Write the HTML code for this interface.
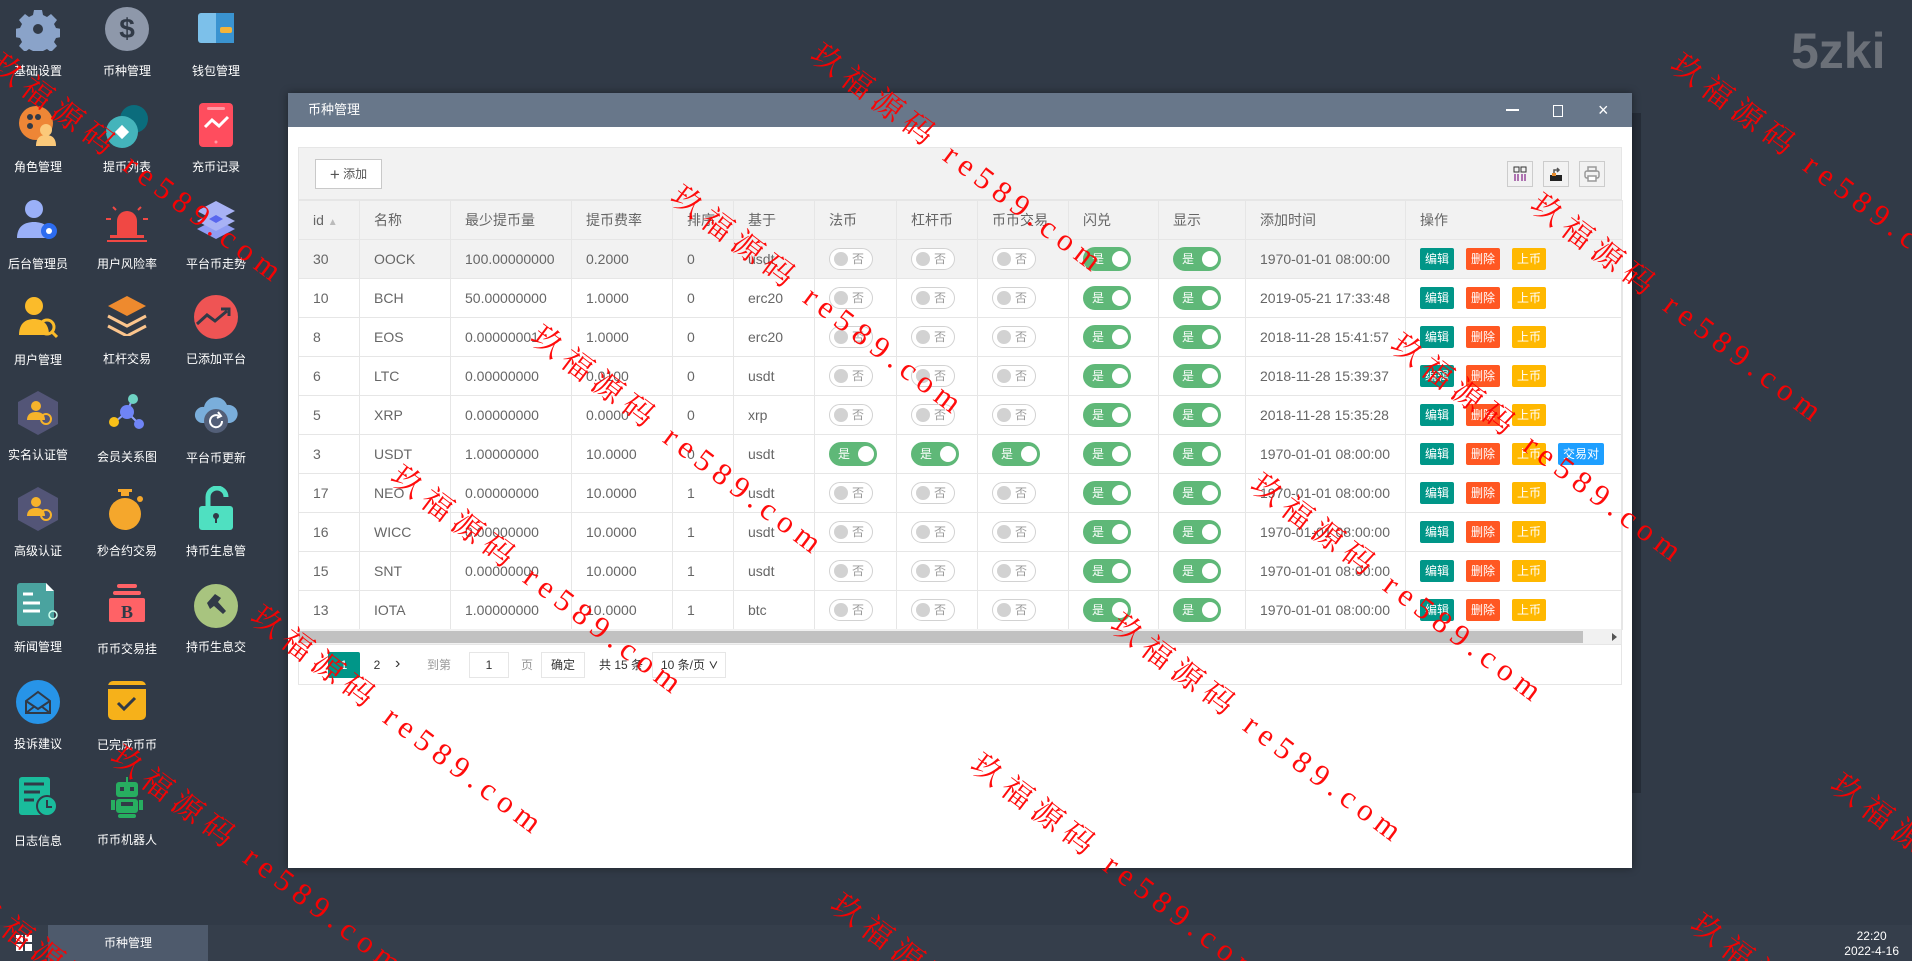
<!DOCTYPE html>
<html><head><meta charset="utf-8">
<style>
*{margin:0;padding:0;box-sizing:border-box}
html,body{width:1912px;height:961px;overflow:hidden}
body{background:#313a47;font-family:"Liberation Sans","Noto Sans CJK SC",sans-serif}
#root{position:relative;width:1912px;height:961px;overflow:hidden;background:#313a47}
.ic{position:absolute;width:88px;text-align:center}
.ic svg{display:block;margin:0 auto}
.ic span{display:block;color:#fff;font-size:12px;line-height:14px;position:absolute;left:0;right:0;white-space:nowrap;overflow:hidden}
.logo{position:absolute;left:1791px;top:22px;font-size:50px;font-weight:bold;color:#6b7078}
.win{position:absolute;left:288px;top:93px;width:1344px;height:775px;background:#fff;box-shadow:0 0 8px rgba(0,0,0,.4)}
.tb{height:34px;background:#68778a;color:#fff;font-size:13px;line-height:34px;padding-left:20px;position:relative}
.box{position:absolute;left:10px;top:54px;width:1324px;height:538px;border:1px solid #e6e6e6}
.tool{height:52px;background:#f2f2f2;border-bottom:1px solid #e6e6e6;position:relative}
.add{position:absolute;left:16px;top:11px;width:67px;height:30px;border:1px solid #c9c9c9;background:#fff;font-size:12px;color:#555;line-height:28px;text-align:center}
.tbtn{position:absolute;top:13px;width:26px;height:26px;border:1px solid #ccc;background:#f2f2f2}
table{border-collapse:collapse;table-layout:fixed;width:1324px;position:absolute;left:-1px;top:52px}
td,th{height:39px;border:1px solid #e6e6e6;font-size:14px;color:#666;font-weight:normal;text-align:left;padding-left:14px;white-space:nowrap;overflow:hidden}
th{background:#f2f2f2}
tr.h td{background:#f2f2f2}
.sw{display:inline-block;width:44px;height:22px;border-radius:11px;border:1px solid #d2d2d2;position:relative;vertical-align:middle;background:#fff}
.sw i{position:absolute;left:4px;top:3px;width:14px;height:14px;border-radius:50%;background:#d2d2d2}
.sw b{position:absolute;left:22px;top:2px;font-size:12px;color:#999;font-weight:normal;line-height:16px}
.sw.on{background:#5fb878;border-color:#5fb878;width:48px;height:24px;border-radius:12px}
.sw.on i{left:28px;top:3px;width:16px;height:16px;background:#fff}
.sw.on b{left:8px;top:3px;color:#fff}
.b{display:inline-block;height:22px;line-height:22px;padding:0 5px;font-size:12px;color:#fff;margin-right:12px;border-radius:2px;vertical-align:middle}
.wm{position:absolute;color:#f00;font-family:"Liberation Serif","Noto Serif CJK SC",serif;font-size:31px;letter-spacing:7px;transform:rotate(37deg);transform-origin:0 0;white-space:nowrap;opacity:.95}
</style></head><body><div id="root">

<div class="logo">5zki</div>

<div class="ic" style="left:-6px;top:7px"><svg width="44" height="44" viewBox="0 0 44 44"><path fill="#8aa3c9" d="M18 3h8l1 5 4 2 4-3 6 6-3 4 2 4 5 1v8l-5 1-2 4 3 4-6 6-4-3-4 2-1 5h-8l-1-5-4-2-4 3-6-6 3-4-2-4-5-1v-8l5-1 2-4-3-4 6-6 4 3 4-2z"/><circle cx="22" cy="22" r="5" fill="#313a47"/></svg><span style="top:57px">基础设置</span></div>
<div class="ic" style="left:83px;top:6px"><svg width="46" height="46" viewBox="0 0 46 46"><circle cx="23" cy="23" r="22" fill="#8e98aa"/><text x="23" y="32" text-anchor="middle" font-size="28" font-weight="bold" fill="#313a47" font-family="Liberation Sans">$</text></svg><span style="top:58px">币种管理</span></div>
<div class="ic" style="left:172px;top:7px"><svg width="40" height="44" viewBox="0 0 40 44"><rect x="2" y="6" width="36" height="30" rx="3" fill="#7cc0ea"/><rect x="20" y="6" width="18" height="30" fill="#3a93d0"/><rect x="24" y="20" width="12" height="6" rx="2" fill="#f4b43a"/></svg><span style="top:57px">钱包管理</span></div>

<div class="ic" style="left:-6px;top:103px"><svg width="44" height="44" viewBox="0 0 44 44"><circle cx="20" cy="20" r="17" fill="#ee8636"/><circle cx="14" cy="14" r="3" fill="#313a47"/><circle cx="22" cy="14" r="3" fill="#313a47"/><circle cx="14" cy="23" r="3" fill="#313a47"/><circle cx="30" cy="27" r="6" fill="#fbc97a"/><path d="M20 43c0-8 4-11 10-11s10 3 10 11z" fill="#fbc97a"/></svg><span style="top:57px">角色管理</span></div>
<div class="ic" style="left:83px;top:103px"><svg width="46" height="46" viewBox="0 0 46 46"><circle cx="30" cy="16" r="14" fill="#0b6c7c"/><circle cx="18" cy="29" r="16" fill="#44b4bb"/><rect x="13" y="24" width="10" height="10" transform="rotate(45 18 29)" fill="#fff"/></svg><span style="top:57px">提币列表</span></div>
<div class="ic" style="left:172px;top:101px"><svg width="40" height="48" viewBox="0 0 40 48"><rect x="3" y="2" width="34" height="44" rx="4" fill="#ff4d5e"/><rect x="11" y="6" width="18" height="3" rx="1.5" fill="#ff9aa4"/><path d="M9 26l7-7 7 6 9-9" stroke="#fff" stroke-width="3" fill="none"/><circle cx="20" cy="41" r="1.5" fill="#ff9aa4"/></svg><span style="top:59px">充币记录</span></div>

<div class="ic" style="left:-6px;top:199px"><svg width="44" height="44" viewBox="0 0 44 44"><circle cx="18" cy="10" r="9" fill="#9ab0f8"/><path d="M1 39c0-12 8-16 17-16s17 4 17 16z" fill="#9ab0f8"/><circle cx="33" cy="32" r="8" fill="#2d6cf0"/><circle cx="33" cy="32" r="3" fill="#fff"/></svg><span style="top:58px">后台管理员</span></div>
<div class="ic" style="left:83px;top:199px"><svg width="46" height="44" viewBox="0 0 46 44"><path d="M13 36V22a10 10 0 0 1 20 0v14z" fill="#f04844"/><rect x="6" y="36" width="34" height="3" fill="#f04844"/><rect x="3" y="41" width="40" height="2" fill="#f04844"/><path d="M2 20h5M39 20h5M9 8l3 3M37 8l-3 3" stroke="#f04844" stroke-width="2"/></svg><span style="top:58px">用户风险率</span></div>
<div class="ic" style="left:172px;top:199px"><svg width="40" height="42" viewBox="0 0 40 42"><path d="M20 20L1 30l19 10 19-10z" fill="#8f9cf3"/><path d="M20 12L1 22l19 10 19-10z" fill="#a8b2f5"/><path d="M20 2L1 12l19 10 19-10z" fill="#a8b2f5"/><path d="M20 16l-7 4 7 4 7-4z" fill="#5866ee"/></svg><span style="top:58px">平台币走势</span></div>

<div class="ic" style="left:-6px;top:295px"><svg width="40" height="44" viewBox="0 0 40 44"><circle cx="16" cy="11" r="9" fill="#fbbb2a"/><path d="M1 40c0-12 7-16 15-16s15 4 15 16z" fill="#fbbb2a"/><circle cx="29" cy="32" r="7" fill="none" stroke="#fbbb2a" stroke-width="3" /><path d="M34 37l5 5" stroke="#fbbb2a" stroke-width="3"/></svg><span style="top:58px">用户管理</span></div>
<div class="ic" style="left:83px;top:294px"><svg width="42" height="42" viewBox="0 0 42 42"><path d="M21 2L2 12l19 10 19-10z" fill="#ee8a2e"/><path d="M2 22l19 10 19-10M2 32l19 10 19-10" stroke="#fcc58d" stroke-width="3" fill="none"/></svg><span style="top:58px">杠杆交易</span></div>
<div class="ic" style="left:172px;top:294px"><svg width="46" height="46" viewBox="0 0 46 46"><circle cx="23" cy="23" r="22" fill="#ef5454"/><path d="M4 30l10-9 8 6 12-10M28 15h8v7" stroke="#313a47" stroke-width="3" fill="none"/></svg><span style="top:58px">已添加平台</span></div>

<div class="ic" style="left:-6px;top:390px"><svg width="42" height="46" viewBox="0 0 42 46"><path d="M21 1l20 11v22L21 45 1 34V12z" fill="#535577"/><circle cx="19" cy="16" r="5" fill="#f6b32b"/><path d="M10 30c0-6 4-8 9-8s9 2 9 8z" fill="#f6b32b"/><circle cx="29" cy="29" r="5" fill="none" stroke="#f6b32b" stroke-width="2"/></svg><span style="top:58px">实名认证管</span></div>
<div class="ic" style="left:83px;top:392px"><svg width="40" height="42" viewBox="0 0 40 42"><path d="M20 20L25 8M20 20L9 29M20 20L31 31" stroke="#8ea0f8" stroke-width="2"/><circle cx="20" cy="20" r="7" fill="#6f84f6"/><circle cx="26" cy="7" r="5" fill="#6fd3c4"/><circle cx="7" cy="30" r="5" fill="#f8c018"/><circle cx="32" cy="32" r="5" fill="#6f84f6"/></svg><span style="top:58px">会员关系图</span></div>
<div class="ic" style="left:172px;top:393px"><svg width="44" height="42" viewBox="0 0 44 42"><path d="M8 30a8 8 0 0 1 2-16 12 12 0 0 1 23-2 9 9 0 0 1 3 18z" fill="#7aaedb"/><circle cx="22" cy="28" r="12" fill="#535f78"/><path d="M28 28a6 6 0 1 1-3-5" stroke="#fff" stroke-width="2" fill="none"/><path d="M24 19l3 4-4 2" stroke="#fff" stroke-width="2" fill="none"/></svg><span style="top:58px">平台币更新</span></div>

<div class="ic" style="left:-6px;top:486px"><svg width="42" height="46" viewBox="0 0 42 46"><path d="M21 1l20 11v22L21 45 1 34V12z" fill="#535577"/><circle cx="19" cy="16" r="5" fill="#f6b32b"/><path d="M10 30c0-6 4-8 9-8s9 2 9 8z" fill="#f6b32b"/><circle cx="29" cy="29" r="5" fill="none" stroke="#f6b32b" stroke-width="2"/></svg><span style="top:58px">高级认证</span></div>
<div class="ic" style="left:83px;top:487px"><svg width="40" height="44" viewBox="0 0 40 44"><circle cx="18" cy="27" r="16" fill="#f5a72c"/><rect x="14" y="4" width="8" height="5" fill="#f5a72c"/><rect x="11" y="2" width="14" height="3" fill="#f5a72c"/><circle cx="33" cy="12" r="3" fill="#f5a72c"/></svg><span style="top:57px">秒合约交易</span></div>
<div class="ic" style="left:172px;top:486px"><svg width="40" height="46" viewBox="0 0 40 46"><path d="M12 20v-9a9 9 0 0 1 18 0" stroke="#4fe0c1" stroke-width="5" fill="none"/><rect x="3" y="20" width="34" height="24" rx="3" fill="#4fe0c1"/><circle cx="20" cy="30" r="3" fill="#313a47"/><rect x="19" y="30" width="2" height="7" fill="#313a47"/></svg><span style="top:58px">持币生息管</span></div>

<div class="ic" style="left:-6px;top:582px"><svg width="44" height="46" viewBox="0 0 44 46"><path d="M4 1h26l8 8v32a3 3 0 0 1-3 3H4a3 3 0 0 1-3-3V4a3 3 0 0 1 3-3z" fill="#4aa39f"/><path d="M30 1v8h8" fill="#fff"/><path d="M7 12h10M7 21h17M7 29h17" stroke="#fff" stroke-width="3"/><circle cx="37" cy="33" r="4" fill="none" stroke="#cfe" stroke-width="1.5"/></svg><span style="top:58px">新闻管理</span></div>
<div class="ic" style="left:83px;top:584px"><svg width="36" height="40" viewBox="0 0 36 40"><rect x="8" y="0" width="20" height="4" rx="2" fill="#ff6266"/><rect x="4" y="7" width="28" height="4" rx="2" fill="#ff6266"/><rect x="0" y="14" width="36" height="24" rx="2" fill="#ff6266"/><text x="18" y="34" text-anchor="middle" font-size="18" font-weight="bold" fill="#313a47" font-family="Liberation Serif">B</text></svg><span style="top:58px;height:16px">币币交易挂</span></div>
<div class="ic" style="left:172px;top:583px"><svg width="46" height="46" viewBox="0 0 46 46"><circle cx="23" cy="23" r="22" fill="#a8c47f"/><path d="M14 20l8-9 6 4-3 4 8 9-3 3-9-8-4 3z" fill="#313a47"/></svg><span style="top:57px">持币生息交</span></div>

<div class="ic" style="left:-6px;top:679px"><svg width="46" height="46" viewBox="0 0 46 46"><circle cx="23" cy="23" r="22" fill="#2794e8"/><path d="M11 22l12-9 12 9v12H11z" fill="none" stroke="#313a47" stroke-width="2"/><path d="M11 22l12 8 12-8M11 34l9-7M35 34l-9-7" stroke="#313a47" stroke-width="2" fill="none"/></svg><span style="top:58px">投诉建议</span></div>
<div class="ic" style="left:83px;top:680px"><svg width="40" height="42" viewBox="0 0 40 42"><rect x="1" y="1" width="38" height="39" rx="5" fill="#f6b11a"/><rect x="1" y="5" width="38" height="4" fill="#313a47"/><path d="M11 23l6 6 11-11" stroke="#313a47" stroke-width="3" fill="none"/></svg><span style="top:58px">已完成币币</span></div>

<div class="ic" style="left:-6px;top:776px"><svg width="40" height="42" viewBox="0 0 40 42"><rect x="1" y="1" width="31" height="38" rx="3" fill="#1abc9c"/><path d="M6 8h20M6 16h16M6 24h10" stroke="#313a47" stroke-width="3"/><circle cx="29" cy="30" r="10" fill="#1abc9c" stroke="#313a47" stroke-width="2"/><path d="M29 24v7h5" stroke="#313a47" stroke-width="2" fill="none"/></svg><span style="top:58px">日志信息</span></div>
<div class="ic" style="left:83px;top:775px"><svg width="36" height="44" viewBox="0 0 36 44"><rect x="7" y="7" width="22" height="15" rx="3" fill="#27ae60"/><rect x="11" y="12" width="4" height="4" fill="#313a47"/><rect x="21" y="12" width="4" height="4" fill="#313a47"/><rect x="17" y="2" width="2" height="5" fill="#27ae60"/><rect x="7" y="24" width="22" height="14" rx="3" fill="#27ae60"/><rect x="12" y="27" width="12" height="4" fill="#313a47"/><rect x="2" y="25" width="4" height="10" fill="#27ae60"/><rect x="30" y="25" width="4" height="10" fill="#27ae60"/><rect x="9" y="39" width="18" height="4" rx="2" fill="#27ae60"/></svg><span style="top:58px">币币机器人</span></div>

<div style="position:absolute;left:1632px;top:113px;width:9px;height:680px;background:#262d38"></div>

<div class="win">
  <div class="tb">币种管理
    <div style="position:absolute;left:1218px;top:16px;width:13px;height:2px;background:#fff"></div>
    <div style="position:absolute;left:1265px;top:12px;width:10px;height:12px;border:1px solid #fff"></div>
    <div style="position:absolute;left:1310px;top:0;font-size:18px;line-height:34px">×</div>
  </div>
  <div class="box">
    <div class="tool">
      <div class="add"><span style="font-size:17px;vertical-align:-2px">+</span> 添加</div>
      <div class="tbtn" style="left:1208px"><svg width="24" height="24" viewBox="0 0 24 24"><rect x="6" y="5" width="5" height="5" fill="none" stroke="#333" stroke-width="1"/><rect x="13" y="5" width="5" height="5" fill="none" stroke="#333" stroke-width="1"/><path d="M7 12v7M10 12v7M14 12v7M17 12v7" stroke="#8a2d8e" stroke-width="1.3"/></svg></div>
      <div class="tbtn" style="left:1244px"><svg width="24" height="24" viewBox="0 0 24 24"><rect x="6" y="13" width="12" height="6" fill="#222"/><path d="M10 12v-4h5M13 6l2 2-2 2" stroke="#555" stroke-width="1.5" fill="none"/><rect x="8" y="11" width="4" height="3" fill="#e78b2b"/></svg></div>
      <div class="tbtn" style="left:1280px"><svg width="24" height="24" viewBox="0 0 24 24"><rect x="8" y="5" width="8" height="4" fill="none" stroke="#999" stroke-width="1.5"/><rect x="5" y="9" width="14" height="7" rx="2" fill="none" stroke="#999" stroke-width="1.5"/><rect x="8" y="14" width="8" height="5" fill="#fff" stroke="#999" stroke-width="1.5"/></svg></div>
    </div>
    <table>
      <colgroup><col style="width:61px"><col style="width:91px"><col style="width:121px"><col style="width:101px"><col style="width:61px"><col style="width:81px"><col style="width:82px"><col style="width:81px"><col style="width:91px"><col style="width:90px"><col style="width:87px"><col style="width:160px"><col style="width:217px"></colgroup>
      <tr><th>id <span style="color:#bbb;font-size:10px">&#9650;&#xFE0E;</span></th><th>名称</th><th>最少提币量</th><th>提币费率</th><th>排序</th><th>基于</th><th>法币</th><th>杠杆币</th><th>币币交易</th><th>闪兑</th><th>显示</th><th>添加时间</th><th>操作</th></tr>
      <tr class="h"><td>30</td><td>OOCK</td><td>100.00000000</td><td>0.2000</td><td>0</td><td>usdt</td><td><span class="sw"><i></i><b>否</b></span></td><td><span class="sw"><i></i><b>否</b></span></td><td><span class="sw"><i></i><b>否</b></span></td><td><span class="sw on"><i></i><b>是</b></span></td><td><span class="sw on"><i></i><b>是</b></span></td><td>1970-01-01 08:00:00</td><td><span class="b" style="background:#009688">编辑</span><span class="b" style="background:#ff5722">删除</span><span class="b" style="background:#ffb800">上币</span></td></tr>
      <tr><td>10</td><td>BCH</td><td>50.00000000</td><td>1.0000</td><td>0</td><td>erc20</td><td><span class="sw"><i></i><b>否</b></span></td><td><span class="sw"><i></i><b>否</b></span></td><td><span class="sw"><i></i><b>否</b></span></td><td><span class="sw on"><i></i><b>是</b></span></td><td><span class="sw on"><i></i><b>是</b></span></td><td>2019-05-21 17:33:48</td><td><span class="b" style="background:#009688">编辑</span><span class="b" style="background:#ff5722">删除</span><span class="b" style="background:#ffb800">上币</span></td></tr>
      <tr><td>8</td><td>EOS</td><td>0.00000001</td><td>1.0000</td><td>0</td><td>erc20</td><td><span class="sw"><i></i><b>否</b></span></td><td><span class="sw"><i></i><b>否</b></span></td><td><span class="sw"><i></i><b>否</b></span></td><td><span class="sw on"><i></i><b>是</b></span></td><td><span class="sw on"><i></i><b>是</b></span></td><td>2018-11-28 15:41:57</td><td><span class="b" style="background:#009688">编辑</span><span class="b" style="background:#ff5722">删除</span><span class="b" style="background:#ffb800">上币</span></td></tr>
      <tr><td>6</td><td>LTC</td><td>0.00000000</td><td>0.0100</td><td>0</td><td>usdt</td><td><span class="sw"><i></i><b>否</b></span></td><td><span class="sw"><i></i><b>否</b></span></td><td><span class="sw"><i></i><b>否</b></span></td><td><span class="sw on"><i></i><b>是</b></span></td><td><span class="sw on"><i></i><b>是</b></span></td><td>2018-11-28 15:39:37</td><td><span class="b" style="background:#009688">编辑</span><span class="b" style="background:#ff5722">删除</span><span class="b" style="background:#ffb800">上币</span></td></tr>
      <tr><td>5</td><td>XRP</td><td>0.00000000</td><td>0.0000</td><td>0</td><td>xrp</td><td><span class="sw"><i></i><b>否</b></span></td><td><span class="sw"><i></i><b>否</b></span></td><td><span class="sw"><i></i><b>否</b></span></td><td><span class="sw on"><i></i><b>是</b></span></td><td><span class="sw on"><i></i><b>是</b></span></td><td>2018-11-28 15:35:28</td><td><span class="b" style="background:#009688">编辑</span><span class="b" style="background:#ff5722">删除</span><span class="b" style="background:#ffb800">上币</span></td></tr>
      <tr><td>3</td><td>USDT</td><td>1.00000000</td><td>10.0000</td><td>0</td><td>usdt</td><td><span class="sw on"><i></i><b>是</b></span></td><td><span class="sw on"><i></i><b>是</b></span></td><td><span class="sw on"><i></i><b>是</b></span></td><td><span class="sw on"><i></i><b>是</b></span></td><td><span class="sw on"><i></i><b>是</b></span></td><td>1970-01-01 08:00:00</td><td><span class="b" style="background:#009688">编辑</span><span class="b" style="background:#ff5722">删除</span><span class="b" style="background:#ffb800">上币</span><span class="b" style="background:#1e9fff">交易对</span></td></tr>
      <tr><td>17</td><td>NEO</td><td>0.00000000</td><td>10.0000</td><td>1</td><td>usdt</td><td><span class="sw"><i></i><b>否</b></span></td><td><span class="sw"><i></i><b>否</b></span></td><td><span class="sw"><i></i><b>否</b></span></td><td><span class="sw on"><i></i><b>是</b></span></td><td><span class="sw on"><i></i><b>是</b></span></td><td>1970-01-01 08:00:00</td><td><span class="b" style="background:#009688">编辑</span><span class="b" style="background:#ff5722">删除</span><span class="b" style="background:#ffb800">上币</span></td></tr>
      <tr><td>16</td><td>WICC</td><td>0.00000000</td><td>10.0000</td><td>1</td><td>usdt</td><td><span class="sw"><i></i><b>否</b></span></td><td><span class="sw"><i></i><b>否</b></span></td><td><span class="sw"><i></i><b>否</b></span></td><td><span class="sw on"><i></i><b>是</b></span></td><td><span class="sw on"><i></i><b>是</b></span></td><td>1970-01-01 08:00:00</td><td><span class="b" style="background:#009688">编辑</span><span class="b" style="background:#ff5722">删除</span><span class="b" style="background:#ffb800">上币</span></td></tr>
      <tr><td>15</td><td>SNT</td><td>0.00000000</td><td>10.0000</td><td>1</td><td>usdt</td><td><span class="sw"><i></i><b>否</b></span></td><td><span class="sw"><i></i><b>否</b></span></td><td><span class="sw"><i></i><b>否</b></span></td><td><span class="sw on"><i></i><b>是</b></span></td><td><span class="sw on"><i></i><b>是</b></span></td><td>1970-01-01 08:00:00</td><td><span class="b" style="background:#009688">编辑</span><span class="b" style="background:#ff5722">删除</span><span class="b" style="background:#ffb800">上币</span></td></tr>
      <tr><td>13</td><td>IOTA</td><td>1.00000000</td><td>10.0000</td><td>1</td><td>btc</td><td><span class="sw"><i></i><b>否</b></span></td><td><span class="sw"><i></i><b>否</b></span></td><td><span class="sw"><i></i><b>否</b></span></td><td><span class="sw on"><i></i><b>是</b></span></td><td><span class="sw on"><i></i><b>是</b></span></td><td>1970-01-01 08:00:00</td><td><span class="b" style="background:#009688">编辑</span><span class="b" style="background:#ff5722">删除</span><span class="b" style="background:#ffb800">上币</span></td></tr>
    </table>
    <div style="position:absolute;left:0;top:481px;width:1322px;height:16px;background:#f1f1f1;border-bottom:1px solid #e6e6e6"><div style="position:absolute;left:0;top:2px;width:1284px;height:12px;background:#c1c1c1"></div><div style="position:absolute;right:4px;top:4px;border-left:5px solid #555;border-top:4px solid transparent;border-bottom:4px solid transparent"></div></div>
    <div style="position:absolute;left:0;top:498px;width:1322px;height:38px;font-size:12px;color:#999">
      <span style="position:absolute;left:29px;top:6px;width:32px;height:26px;background:#009688;color:#fff;text-align:center;line-height:26px;border-radius:2px">1</span>
      <span style="position:absolute;left:68px;top:6px;width:20px;line-height:26px;color:#333;text-align:center">2</span>
      <span style="position:absolute;left:96px;top:5px;line-height:26px;color:#333;font-size:16px">&#x203A;</span>
      <span style="position:absolute;left:128px;top:6px;line-height:26px">到第</span>
      <span style="position:absolute;left:170px;top:6px;width:40px;height:26px;border:1px solid #e6e6e6;line-height:24px;color:#333;text-align:center">1</span>
      <span style="position:absolute;left:222px;top:6px;line-height:26px">页</span>
      <span style="position:absolute;left:242px;top:6px;width:44px;height:26px;border:1px solid #e6e6e6;line-height:24px;color:#333;text-align:center">确定</span>
      <span style="position:absolute;left:300px;top:6px;line-height:26px;color:#333">共 15 条</span>
      <span style="position:absolute;left:353px;top:6px;width:74px;height:26px;border:1px solid #e6e6e6;line-height:24px;color:#333;padding-left:8px">10 条/页 <b style="font-size:10px">&#x2228;</b></span>
    </div>
  </div>
</div>

<div style="position:absolute;left:0;top:925px;width:1912px;height:36px;background:#353e4b">
  <div style="position:absolute;left:16px;top:10px;width:16px;height:16px;background:#fff"><div style="position:absolute;left:7px;top:0;width:2px;height:16px;background:#353e4b"></div><div style="position:absolute;left:0;top:7px;width:16px;height:2px;background:#353e4b"></div></div>
  <div style="position:absolute;left:48px;top:0;width:160px;height:36px;background:#4e5a6c;color:#fff;font-size:12px;line-height:36px;text-align:center">币种管理</div>
  <div style="position:absolute;right:13px;top:4px;color:#fff;font-size:12px;line-height:15px;text-align:center">22:20<br>2022-4-16</div>
</div>

<div class="wm" style="left:830px;top:30px">玖福源码 re589.com</div>
<div class="wm" style="left:690px;top:172px">玖福源码 re589.com</div>
<div class="wm" style="left:550px;top:312px">玖福源码 re589.com</div>
<div class="wm" style="left:410px;top:452px">玖福源码 re589.com</div>
<div class="wm" style="left:270px;top:592px">玖福源码 re589.com</div>
<div class="wm" style="left:130px;top:732px">玖福源码 re589.com</div>
<div class="wm" style="left:1690px;top:40px">玖福源码 re589.com</div>
<div class="wm" style="left:1550px;top:180px">玖福源码 re589.com</div>
<div class="wm" style="left:1410px;top:320px">玖福源码 re589.com</div>
<div class="wm" style="left:1270px;top:460px">玖福源码 re589.com</div>
<div class="wm" style="left:1130px;top:600px">玖福源码 re589.com</div>
<div class="wm" style="left:990px;top:740px">玖福源码 re589.com</div>
<div class="wm" style="left:850px;top:880px">玖福源码 re589.com</div>
<div class="wm" style="left:1850px;top:760px">玖福源码 re589.com</div>
<div class="wm" style="left:1710px;top:900px">玖福源码 re589.com</div>
<div class="wm" style="left:10px;top:40px">玖福源码 re589.com</div>
<div class="wm" style="left:-10px;top:880px">玖福源码 re589.com</div>
</div></body></html>
